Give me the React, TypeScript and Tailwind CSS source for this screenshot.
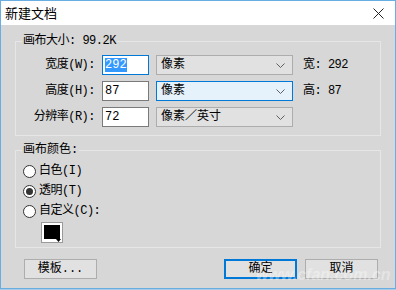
import React from "react";

const font = { fontFamily: '"Liberation Mono", "Noto Sans CJK SC", monospace' };
const titleFont = { fontFamily: '"Noto Sans CJK SC", "Liberation Sans", sans-serif' };

function Chevron() {
  return (
    <svg width="9" height="5" viewBox="0 0 9 5" className="shrink-0">
      <path d="M0.5 0.5 L4.5 4.5 L8.5 0.5" fill="none" stroke="#606060" strokeWidth="1" />
    </svg>
  );
}

function Select({ value, focused }: { value: string; focused?: boolean }) {
  return (
    <div
      className={`w-[137px] h-[20px] flex items-center justify-between pl-[4px] pr-[7px] border ${
        focused ? "border-[#0078d7] bg-[#e5f1fb]" : "border-[#adadad] bg-[#e1e1e1]"
      }`}
    >
      <span>{value}</span>
      <Chevron />
    </div>
  );
}

function Row({
  label,
  value,
  unit,
  info,
  inputFocused,
  selectFocused,
}: {
  label: string;
  value: string;
  unit: string;
  info?: string;
  inputFocused?: boolean;
  selectFocused?: boolean;
}) {
  return (
    <div className="flex items-center h-[20px]">
      <div className="w-[80px] text-right pr-[1px] tracking-[-0.5px] whitespace-nowrap">{label}</div>
      <div
        className={`ml-[6px] w-[47px] h-[20px] bg-white flex items-center px-[2px] border ${
          inputFocused ? "border-[#0078d7]" : "border-[#7a7a7a]"
        }`}
      >
        {inputFocused ? (
          <span className="bg-[#3399ff] text-white leading-[14px]">{value}</span>
        ) : (
          <span>{value}</span>
        )}
      </div>
      <div className="ml-[7px]">
        <Select value={unit} focused={selectFocused} />
      </div>
      {info && <div className="ml-[10px] tracking-[-0.5px]">{info}</div>}
    </div>
  );
}

function Radio({ label, checked }: { label: string; checked?: boolean }) {
  return (
    <div className="flex items-center h-[20px]">
      <div className="w-[13px] h-[13px] rounded-full border border-[#333] bg-white flex items-center justify-center">
        {checked && <div className="w-[7px] h-[7px] rounded-full bg-[#333]" />}
      </div>
      <span className="ml-[3px] tracking-[-0.5px]">{label}</span>
    </div>
  );
}

export default function App() {
  return (
    <div
      style={font}
      className="w-[396px] h-[290px] bg-[#a9cbe6] text-[12px] leading-[16px] text-black relative overflow-hidden"
    >
      <div className="w-[396px] h-[289px] border border-[#69aee3] bg-[#d7d7d7] flex flex-col">
        {/* title bar */}
        <div className="h-[24px] bg-white flex items-center justify-between pl-[4px] pr-[11px] shrink-0">
          <span className="text-[13px]" style={titleFont}>新建文档</span>
          <svg width="11" height="11" viewBox="0 0 11 11">
            <path d="M0.5 0.5 L10.5 10.5 M10.5 0.5 L0.5 10.5" stroke="#222" strokeWidth="1" />
          </svg>
        </div>

        <div className="px-[14px] pt-[8px]">
          <fieldset className="border border-[#e6e6e6] pb-[8px]">
            <legend className="ml-[6px] px-[1px] tracking-[-0.5px]">画布大小: 99.2K</legend>
            <div className="flex flex-col gap-[6px] pt-[6px]">
              <Row label="宽度(W):" value="292" unit="像素" info="宽: 292" inputFocused />
              <Row label="高度(H):" value="87" unit="像素" info="高: 87" selectFocused />
              <Row label="分辨率(R):" value="72" unit="像素／英寸" />
            </div>
          </fieldset>

          <fieldset className="mt-[6px] border border-[#e6e6e6] pb-[4px]">
            <legend className="ml-[6px] px-[1px]">画布颜色:</legend>
            <div className="flex flex-col pl-[7px] pt-[3px]">
              <Radio label="白色(I)" />
              <Radio label="透明(T)" checked />
              <Radio label="自定义(C):" />
              <div className="ml-[18px] mt-[1px] w-[22px] h-[21px] border border-[#9a9a9a] bg-white p-[2px] pb-[3px] relative">
                <div className="w-full h-full bg-black" />
                <svg width="5" height="3" viewBox="0 0 5 3" className="absolute right-[1px] bottom-[0px]">
                  <path d="M0 0 L5 0 L2.5 3 Z" fill="#000" />
                </svg>
              </div>
            </div>
          </fieldset>

          <div className="mt-[11px] flex items-center pl-[9px]">
            <button className="w-[73px] h-[20px] border border-[#adadad] bg-[#e1e1e1] flex items-center justify-center">
              模板...
            </button>
            <div className="flex-1" />
            <button className="w-[73px] h-[20px] border-2 border-[#0078d7] bg-[#e1e1e1] flex items-center justify-center">
              确定
            </button>
            <button className="ml-[8px] mr-[3px] w-[73px] h-[20px] border border-[#adadad] bg-[#e1e1e1] flex items-center justify-center">
              取消
            </button>
          </div>
        </div>
      </div>

      {/* watermark */}
      <div
        className="absolute left-[256px] top-[266px] text-[16px] leading-[18px] font-bold italic text-white/35 pointer-events-none"
        style={{ fontFamily: '"Liberation Sans", sans-serif' }}
      >
        www.cfan.com.cn
      </div>
    </div>
  );
}
